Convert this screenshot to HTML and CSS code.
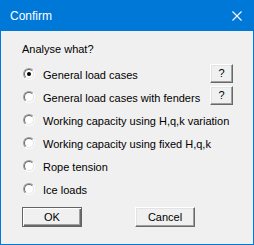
FILE: index.html
```html
<!DOCTYPE html>
<html>
<head>
<meta charset="utf-8">
<link rel="stylesheet" href="styles.css">
</head>
<body>
<div class="window">
  <div class="titlebar">
    <span class="title">Confirm</span>
    <svg class="close" width="10" height="10" viewBox="0 0 10 10"><path d="M0.5 0.5L9.5 9.5M9.5 0.5L0.5 9.5" stroke="#fff" stroke-width="1.1" fill="none"/></svg>
  </div>
  <div class="content">
    <div class="prompt">Analyse what?</div>
    <div class="options">
      <div class="option"><span class="radio"><span class="radio-in"><span class="dot"></span></span></span><span class="label">General load cases</span><button class="btn help">?</button></div>
      <div class="option"><span class="radio"><span class="radio-in"></span></span><span class="label">General load cases with fenders</span><button class="btn help help-2">?</button></div>
      <div class="option"><span class="radio"><span class="radio-in"></span></span><span class="label">Working capacity using H,q,k variation</span></div>
      <div class="option"><span class="radio"><span class="radio-in"></span></span><span class="label">Working capacity using fixed H,q,k</span></div>
      <div class="option"><span class="radio"><span class="radio-in"></span></span><span class="label">Rope tension</span></div>
      <div class="option"><span class="radio"><span class="radio-in"></span></span><span class="label">Ice loads</span></div>
    </div>
    <div class="actions">
      <button class="btn action default">OK</button>
      <button class="btn action">Cancel</button>
    </div>
  </div>
</div>
</body>
</html>
```
FILE: styles.css
```css
html, body {
  margin: 0;
  padding: 0;
  background: #ffffff;
}
.window {
  width: 254px;
  height: 245px;
  box-sizing: border-box;
  border: 1px solid #0078d7;
  border-top: 0;
  background: #f0f0f0;
  font-family: "Liberation Sans", Arial, sans-serif;
  font-size: 11px;
  color: #000;
  display: flex;
  flex-direction: column;
}
.titlebar {
  height: 31px;
  margin: 0 -1px;
  background: #0078d7;
  display: flex;
  align-items: center;
  justify-content: space-between;
  padding: 1px 12px 0 10px;
  box-sizing: border-box;
}
.title {
  color: #fff;
  font-size: 12px;
  line-height: 14px;
}
.close {
  display: block;
  margin-bottom: 1px;
}
.content {
  padding: 12px 20px 0 21px;
  display: flex;
  flex-direction: column;
}
.prompt {
  line-height: 13px;
  height: 13px;
}
.options {
  margin-top: 7px;
  padding-left: 1px;
  display: flex;
  flex-direction: column;
}
.option {
  display: grid;
  grid-template-columns: 12px 1fr 23px;
  column-gap: 8px;
  height: 23px;
  align-items: start;
}
.label {
  margin-top: 6px;
  line-height: 13px;
  white-space: nowrap;
}
.radio {
  margin-top: 5px;
  width: 12px;
  height: 12px;
  box-sizing: border-box;
  border: 1px solid;
  border-color: #a0a0a0 #ffffff #ffffff #a0a0a0;
  border-radius: 50%;
  display: block;
}
.radio-in {
  width: 10px;
  height: 10px;
  box-sizing: border-box;
  border: 1px solid;
  border-color: #696969 #e3e3e3 #e3e3e3 #696969;
  border-radius: 50%;
  background: #fff;
  display: flex;
  align-items: center;
  justify-content: center;
}
.dot {
  width: 4px;
  height: 4px;
  border-radius: 50%;
  background: #000;
  display: block;
}
.btn {
  font-family: "Liberation Sans", Arial, sans-serif;
  font-size: 11px;
  color: #000;
  background: #f0f0f0;
  padding: 0;
  margin: 0;
  box-sizing: border-box;
  border: 1px solid;
  border-color: #ffffff #696969 #696969 #ffffff;
  box-shadow: inset -1px -1px 0 #a0a0a0, inset 1px 1px 0 #e3e3e3;
  line-height: 13px;
  border-radius: 0;
}
.help {
  width: 23px;
  height: 19px;
  margin-top: 1px;
  grid-column: 3;
}
.help-2 {
  margin-top: 0;
}
.actions {
  margin-top: 6px;
  display: flex;
  gap: 53px;
}
.action {
  width: 60px;
  height: 20px;
}
.default {
  border: 1px solid #646464;
  box-shadow: inset 1px 1px 0 #ffffff, inset -1px -1px 0 #696969, inset -2px -2px 0 #a0a0a0;
}
```
